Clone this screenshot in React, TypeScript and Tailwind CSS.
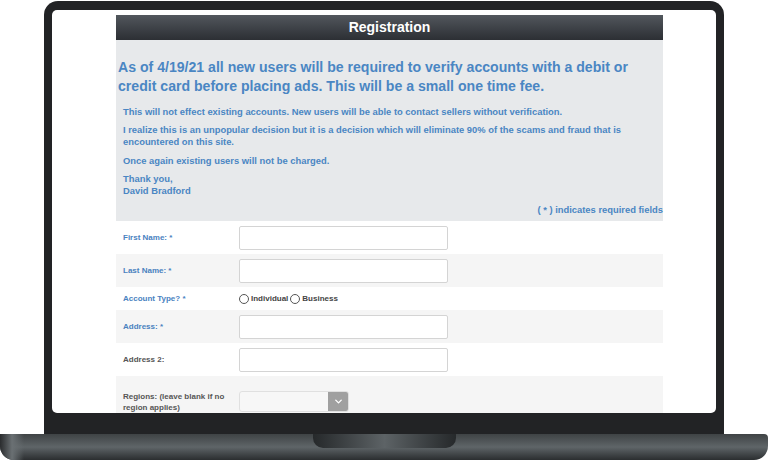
import { ChevronDown } from "lucide-react"

type Field = {
  label: string
  required?: boolean
  kind: "text" | "radio" | "select"
}

const fields: Field[] = [
  { label: "First Name:", required: true, kind: "text" },
  { label: "Last Name:", required: true, kind: "text" },
  { label: "Account Type?", required: true, kind: "radio" },
  { label: "Address:", required: true, kind: "text" },
  { label: "Address 2:", kind: "text" },
  { label: "Regions: (leave blank if no region applies)", kind: "select" },
]

function Radio({ label }: { label: string }) {
  return (
    <label className="flex items-center gap-[2px]">
      <span className="w-[10px] h-[10px] rounded-full border border-[#555] bg-white" />
      <span>{label}</span>
    </label>
  )
}

function FormRow({ field, index }: { field: Field; index: number }) {
  const shaded = index % 2 === 1
  const tall = field.kind === "select"
  return (
    <div
      className={`flex items-center pl-[7px] ${shaded ? "bg-[#f5f5f5]" : "bg-white"} ${
        field.kind === "radio" ? "h-[23px]" : tall ? "h-[51px]" : "h-[33px]"
      }`}
    >
      <div
        className={`w-[116px] pr-2 text-[8px] leading-[11px] font-bold ${
          field.required ? "text-[#4a82bf]" : "text-[#555]"
        }`}
      >
        {field.label}
        {field.required && " *"}
      </div>
      {field.kind === "text" && (
        <div className="w-[209px] h-[24px] border border-[#d4d4d4] rounded-[2px] bg-white" />
      )}
      {field.kind === "radio" && (
        <div className="flex items-center gap-[2px] text-[8px] font-bold text-[#444]">
          <Radio label="Individual" />
          <Radio label="Business" />
        </div>
      )}
      {field.kind === "select" && (
        <div className="flex w-[110px] h-[21px] rounded-[3px] border border-[#e0e0e0] bg-[#f7f7f7] overflow-hidden">
          <div className="flex-1" />
          <div className="w-[20px] bg-[#a0a0a0] flex items-center justify-center">
            <ChevronDown className="w-[11px] h-[11px] text-white" strokeWidth={3} />
          </div>
        </div>
      )}
    </div>
  )
}

function RegistrationPage() {
  return (
    <div className="w-[547px] ml-[64px] mt-[5px]">
      <div className="h-[25px] flex items-center justify-center bg-gradient-to-b from-[#52575d] to-[#2c2f34] text-white text-[14px] font-bold">
        Registration
      </div>

      <div className="bg-[#e7e9eb] pt-[18px] pb-[5px] text-[#4a86c3] font-bold">
        <p className="pl-[2px] pr-4 text-[14.1px] leading-[19px]">
          As of 4/19/21 all new users will be required to verify accounts with a debit or
          credit card before placing ads. This will be a small one time fee.
        </p>
        <div className="pl-[7px] text-[9.4px] leading-[12px] mt-[10px] flex flex-col gap-[6px]">
          <p className="pr-4">
            This will not effect existing accounts. New users will be able to contact sellers without verification.
          </p>
          <p className="pr-[30px]">
            I realize this is an unpopular decision but it is a decision which will eliminate 90% of the scams and
            fraud that is encountered on this site.
          </p>
          <p className="mt-[1px]">Once again existing users will not be charged.</p>
          <p>
            Thank you,
            <br />
            David Bradford
          </p>
          <p className="text-right mt-[1px]">( * ) indicates required fields</p>
        </div>
      </div>

      <div>
        {fields.map((f, i) => (
          <FormRow key={f.label} field={f} index={i} />
        ))}
      </div>
    </div>
  )
}

export default function App() {
  return (
    <div
      className="w-[768px] h-[460px] bg-white overflow-hidden flex flex-col"
      style={{ fontFamily: '"Liberation Sans", Arial, sans-serif' }}
    >
      {/* lid */}
      <div className="ml-[44px] mt-[1px] w-[680px] h-[433px] rounded-t-[14px] bg-[#222325] pt-[9px] px-[8px] pb-[21px]">
        <div className="h-full rounded-[5px] bg-white overflow-hidden">
          <RegistrationPage />
        </div>
      </div>

      {/* base */}
      <div className="relative h-[26px] rounded-b-[14px] rounded-tr-[4px] bg-gradient-to-b from-[#3f4345] via-[#5f6568] to-[#2b2e30]">
        <div className="absolute left-0 top-0 h-full w-[24px] rounded-bl-[14px] bg-gradient-to-r from-[#2a2c2e] via-[#6a7073] to-transparent" />
        <div className="absolute left-[313px] top-0 w-[143px] h-[14px] rounded-b-[10px] bg-gradient-to-r from-[#26292b] via-[#5d6366] to-[#26292b]" />
      </div>
    </div>
  )
}
